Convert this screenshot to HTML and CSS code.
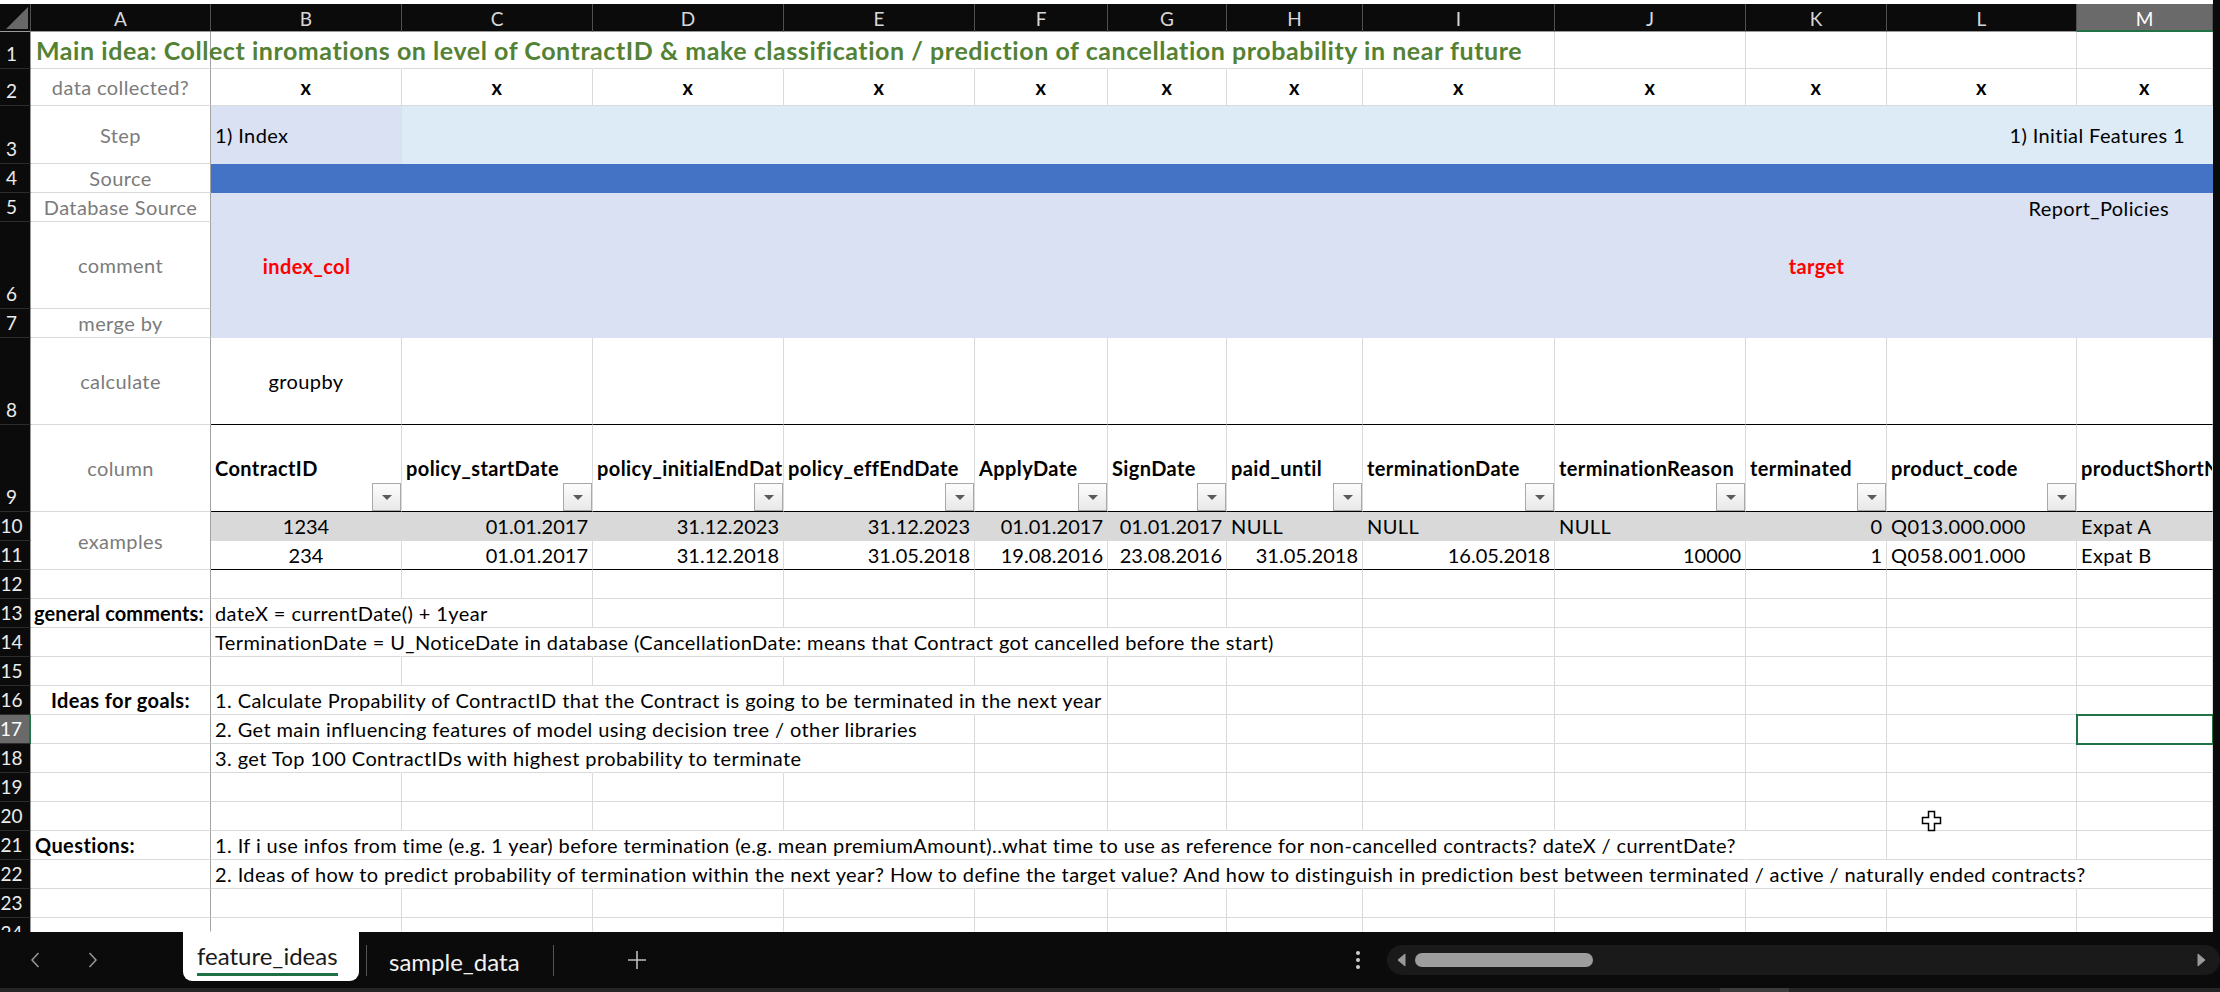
FILE: index.html
```html
<!DOCTYPE html>
<html>
<head>
<meta charset="utf-8">
<title>feature_ideas</title>
<link rel="stylesheet" href="styles.css">
</head>
<body>
<div class="app">
  <div class="sheet">
    <!-- column header -->
    <div class="corner"><svg width="22" height="22" viewBox="0 0 22 22"><path d="M22 0V22H0Z" fill="#686868"/></svg></div>
    <div class="ch">A</div><div class="ch">B</div><div class="ch">C</div><div class="ch">D</div><div class="ch">E</div><div class="ch">F</div><div class="ch">G</div><div class="ch">H</div><div class="ch">I</div><div class="ch">J</div><div class="ch">K</div><div class="ch">L</div><div class="ch sel">M</div>

    <!-- row 1 -->
    <div class="rh">1</div>
    <div class="c a ov title">Main idea: Collect inromations on level of ContractID &amp; make classification / prediction of cancellation probability in near future</div>
    <div class="c nr"></div><div class="c nr"></div><div class="c nr"></div><div class="c nr"></div><div class="c nr"></div><div class="c nr"></div><div class="c nr"></div>
    <div class="c"></div><div class="c"></div><div class="c"></div><div class="c"></div><div class="c"></div>

    <!-- row 2 -->
    <div class="rh">2</div>
    <div class="c a lab">data collected?</div>
    <div class="c x">x</div><div class="c x">x</div><div class="c x">x</div><div class="c x">x</div><div class="c x">x</div><div class="c x">x</div><div class="c x">x</div><div class="c x">x</div><div class="c x">x</div><div class="c x">x</div><div class="c x">x</div><div class="c x">x</div>

    <!-- row 3 -->
    <div class="rh">3</div>
    <div class="c a lab">Step</div>
    <div class="c b3">1) Index</div>
    <div class="c c3">1) Initial Features 1</div>

    <!-- row 4 -->
    <div class="rh">4</div>
    <div class="c a lab">Source</div>
    <div class="c blue"></div>

    <!-- rows 5-7 -->
    <div class="rh">5</div>
    <div class="c a lab">Database Source</div>
    <div class="rh">6</div>
    <div class="c a lab">comment</div>
    <div class="rh">7</div>
    <div class="c a lab">merge by</div>
    <div class="block"></div>
    <div class="t red idx">index_col</div>
    <div class="t red tgt">target</div>
    <div class="t rp">Report_Policies</div>

    <!-- row 8 -->
    <div class="rh">8</div>
    <div class="c a lab">calculate</div>
    <div class="c bk ctr">groupby</div>
    <div class="c bk"></div><div class="c bk"></div><div class="c bk"></div><div class="c bk"></div><div class="c bk"></div><div class="c bk"></div><div class="c bk"></div><div class="c bk"></div><div class="c bk"></div><div class="c bk"></div><div class="c bk"></div>

    <!-- row 9 -->
    <div class="rh">9</div>
    <div class="c a lab">column</div>
    <div class="c hd bk"><span>ContractID</span><i class="dd"></i></div>
    <div class="c hd bk"><span>policy_startDate</span><i class="dd"></i></div>
    <div class="c hd bk"><span>policy_initialEndDate</span><i class="dd"></i></div>
    <div class="c hd bk"><span>policy_effEndDate</span><i class="dd"></i></div>
    <div class="c hd bk"><span>ApplyDate</span><i class="dd"></i></div>
    <div class="c hd bk"><span>SignDate</span><i class="dd"></i></div>
    <div class="c hd bk"><span>paid_until</span><i class="dd"></i></div>
    <div class="c hd bk"><span>terminationDate</span><i class="dd"></i></div>
    <div class="c hd bk"><span>terminationReason</span><i class="dd"></i></div>
    <div class="c hd bk"><span>terminated</span><i class="dd"></i></div>
    <div class="c hd bk"><span>product_code</span><i class="dd"></i></div>
    <div class="c hd bk"><span>productShortName</span></div>

    <!-- row 10 -->
    <div class="rh">10</div>
    <div class="c a lab r2">examples</div>
    <div class="c g ctr num">1234</div>
    <div class="c g rt">01.01.2017</div>
    <div class="c g rt">31.12.2023</div>
    <div class="c g rt">31.12.2023</div>
    <div class="c g rt">01.01.2017</div>
    <div class="c g rt">01.01.2017</div>
    <div class="c g">NULL</div>
    <div class="c g">NULL</div>
    <div class="c g">NULL</div>
    <div class="c g rt">0</div>
    <div class="c g">Q013.000.000</div>
    <div class="c g">Expat A</div>

    <!-- row 11 -->
    <div class="rh">11</div>
    <div class="c bk ctr num">234</div>
    <div class="c bk rt">01.01.2017</div>
    <div class="c bk rt">31.12.2018</div>
    <div class="c bk rt">31.05.2018</div>
    <div class="c bk rt">19.08.2016</div>
    <div class="c bk rt">23.08.2016</div>
    <div class="c bk rt">31.05.2018</div>
    <div class="c bk rt">16.05.2018</div>
    <div class="c bk rt">10000</div>
    <div class="c bk rt">1</div>
    <div class="c bk">Q058.001.000</div>
    <div class="c bk">Expat B</div>

    <!-- row 12 -->
    <div class="rh">12</div>
    <div class="c a"></div>
    <div class="c"></div><div class="c"></div><div class="c"></div><div class="c"></div><div class="c"></div><div class="c"></div><div class="c"></div><div class="c"></div><div class="c"></div><div class="c"></div><div class="c"></div><div class="c"></div>

    <!-- row 13 -->
    <div class="rh">13</div>
    <div class="c a b tight">general comments:</div>
    <div class="c nr ov">dateX = currentDate() + 1year</div>
    <div class="c"></div>
    <div class="c"></div><div class="c"></div><div class="c"></div><div class="c"></div><div class="c"></div><div class="c"></div><div class="c"></div><div class="c"></div><div class="c"></div><div class="c"></div>

    <!-- row 14 -->
    <div class="rh">14</div>
    <div class="c a"></div>
    <div class="c nr ov">TerminationDate = U_NoticeDate in database (CancellationDate: means that Contract got cancelled before the start)</div>
    <div class="c nr"></div><div class="c nr"></div><div class="c nr"></div><div class="c nr"></div><div class="c nr"></div>
    <div class="c"></div>
    <div class="c"></div><div class="c"></div><div class="c"></div><div class="c"></div><div class="c"></div>

    <!-- row 15 -->
    <div class="rh">15</div>
    <div class="c a"></div>
    <div class="c"></div><div class="c"></div><div class="c"></div><div class="c"></div><div class="c"></div><div class="c"></div><div class="c"></div><div class="c"></div><div class="c"></div><div class="c"></div><div class="c"></div><div class="c"></div>

    <!-- row 16 -->
    <div class="rh">16</div>
    <div class="c a b ctr">Ideas for goals:</div>
    <div class="c nr ov">1. Calculate Propability of ContractID that the Contract is going to be terminated in the next year</div>
    <div class="c nr"></div><div class="c nr"></div><div class="c nr"></div>
    <div class="c"></div>
    <div class="c"></div><div class="c"></div><div class="c"></div><div class="c"></div><div class="c"></div><div class="c"></div><div class="c"></div>

    <!-- row 17 -->
    <div class="rh sel">17</div>
    <div class="c a"></div>
    <div class="c nr ov">2. Get main influencing features of model using decision tree / other libraries</div>
    <div class="c nr"></div><div class="c nr"></div>
    <div class="c"></div>
    <div class="c"></div><div class="c"></div><div class="c"></div><div class="c"></div><div class="c"></div><div class="c"></div><div class="c"></div>
    <div class="c cur"></div>

    <!-- row 18 -->
    <div class="rh">18</div>
    <div class="c a"></div>
    <div class="c nr ov">3. get Top 100 ContractIDs with highest probability to terminate</div>
    <div class="c nr"></div><div class="c nr"></div>
    <div class="c"></div>
    <div class="c"></div><div class="c"></div><div class="c"></div><div class="c"></div><div class="c"></div><div class="c"></div><div class="c"></div><div class="c"></div>

    <!-- row 19 -->
    <div class="rh">19</div>
    <div class="c a"></div>
    <div class="c"></div><div class="c"></div><div class="c"></div><div class="c"></div><div class="c"></div><div class="c"></div><div class="c"></div><div class="c"></div><div class="c"></div><div class="c"></div><div class="c"></div><div class="c"></div>

    <!-- row 20 -->
    <div class="rh">20</div>
    <div class="c a"></div>
    <div class="c"></div><div class="c"></div><div class="c"></div><div class="c"></div><div class="c"></div><div class="c"></div><div class="c"></div><div class="c"></div><div class="c"></div><div class="c"></div><div class="c"></div><div class="c"></div>

    <!-- row 21 -->
    <div class="rh">21</div>
    <div class="c a b">Questions:</div>
    <div class="c nr ov">1. If i use infos from time (e.g. 1 year) before termination (e.g. mean premiumAmount)..what time to use as reference for non-cancelled contracts? dateX / currentDate?</div>
    <div class="c nr"></div><div class="c nr"></div><div class="c nr"></div><div class="c nr"></div><div class="c nr"></div><div class="c nr"></div><div class="c nr"></div><div class="c nr"></div>
    <div class="c"></div>
    <div class="c"></div><div class="c"></div>

    <!-- row 22 -->
    <div class="rh">22</div>
    <div class="c a"></div>
    <div class="c nr ov">2. Ideas of how to predict probability of termination within the next year? How to define the target value? And how to distinguish in prediction best between terminated / active / naturally ended contracts?</div>
    <div class="c nr"></div><div class="c nr"></div><div class="c nr"></div><div class="c nr"></div><div class="c nr"></div><div class="c nr"></div><div class="c nr"></div><div class="c nr"></div><div class="c nr"></div><div class="c nr"></div>
    <div class="c"></div>

    <!-- row 23 -->
    <div class="rh">23</div>
    <div class="c a"></div>
    <div class="c"></div><div class="c"></div><div class="c"></div><div class="c"></div><div class="c"></div><div class="c"></div><div class="c"></div><div class="c"></div><div class="c"></div><div class="c"></div><div class="c"></div><div class="c"></div>

    <!-- row 24 (partially visible) -->
    <div class="rh last">24</div>
    <div class="c a lr"></div>
    <div class="c lr"></div><div class="c lr"></div><div class="c lr"></div><div class="c lr"></div><div class="c lr"></div><div class="c lr"></div><div class="c lr"></div><div class="c lr"></div><div class="c lr"></div><div class="c lr"></div><div class="c lr"></div><div class="c lr"></div>
  </div>

  <div class="tabs">
    <div class="nav">
      <svg class="chev" width="10" height="16" viewBox="0 0 10 16"><path d="M8.5 1 2 8l6.5 7" fill="none" stroke="#9a9a9a" stroke-width="1.5"/></svg>
      <svg class="chev next" width="10" height="16" viewBox="0 0 10 16"><path d="M1.5 1 8 8l-6.5 7" fill="none" stroke="#9a9a9a" stroke-width="1.5"/></svg>
    </div>
    <div class="tab active"><span class="lbl">feature_ideas</span></div>
    <div class="sep"></div>
    <div class="tab other">sample_data</div>
    <div class="sep"></div>
    <svg class="plus" width="20" height="20" viewBox="0 0 20 20"><path d="M10 1v18M1 10h18" stroke="#bdbdbd" stroke-width="1.6"/></svg>
    <div class="dots"><i></i><i></i><i></i></div>
    <div class="scroll">
      <svg class="arr" width="9" height="14" viewBox="0 0 9 14"><path d="M8 1v12L1 7Z" fill="#9a9a9a" stroke="#9a9a9a" stroke-linejoin="round"/></svg>
      <div class="thumb"></div>
      <svg class="arr right" width="9" height="14" viewBox="0 0 9 14"><path d="M1 1v12l7-6Z" fill="#9a9a9a" stroke="#9a9a9a" stroke-linejoin="round"/></svg>
    </div>
  </div>
  <div class="bottom"><i></i></div>

  <svg class="cursor" width="22" height="22" viewBox="0 0 22 22"><path d="M7.5 1.5h6v6h6v6h-6v7h-6v-7h-6v-6h6z" fill="#fff" stroke="#000" stroke-width="1.5"/></svg>
</div>
</body>
</html>
```

FILE: styles.css
```css
* { box-sizing: border-box; }
html, body { margin: 0; padding: 0; }
body {
  background: #0b0b0b;
  width: 2220px;
  height: 992px;
  overflow: hidden;
  font-family: Lato, "Liberation Sans", sans-serif;
}
.app {
  position: relative;
  display: flex;
  flex-direction: column;
  width: 2220px;
  height: 992px;
}

/* ---------- grid ---------- */
.sheet {
  flex: none;
  display: grid;
  width: 2213px;
  height: 932px;
  overflow: hidden;
  grid-template-columns: 31px 180px 191px 191px 191px 191px 133px 119px 136px 192px 191px 141px 190px 136px;
  grid-template-rows: 32px 37px 37px 58px 29px 29px 87px 29px 87px 87px 29px 29px repeat(12, 29px) 14px;
  background: #fff;
}

.corner {
  margin-top: 4px;
  background: #0b0b0b;
  border-right: 1px solid #4f4f4f;
  border-bottom: 1px solid #9a9a9a;
  display: flex;
  align-items: flex-end;
  justify-content: flex-end;
  padding: 0 2px 2px 0;
}
.corner svg { display: block; }

.ch {
  margin-top: 4px;
  background: #0b0b0b;
  color: #d8d8d8;
  font-size: 19px;
  display: flex;
  align-items: center;
  justify-content: center;
  padding-top: 2px;
  border-right: 1px solid #4f4f4f;
  border-bottom: 1px solid #9a9a9a;
}
.ch.sel {
  background: #6a6a6a;
  color: #fff;
  border-bottom: 2px solid #217346;
}

.rh {
  background: #0b0b0b;
  color: #ececec;
  font-size: 19px;
  line-height: 26px;
  display: flex;
  align-items: flex-end;
  justify-content: center;
  padding: 0 7px 1px 0;
  border-right: 1px solid #9a9a9a;
  border-bottom: 1px solid #2c2c2c;
  overflow: hidden;
}
.rh.sel {
  background: #6a6a6a;
  color: #fff;
  border-right: 2px solid #217346;
}
.rh.last {
  align-items: flex-start;
  padding-top: 2px;
  border-bottom: none;
}

.c {
  background: #fff;
  border-right: 1px solid #dadada;
  border-bottom: 1px solid #dadada;
  display: flex;
  align-items: center;
  padding: 0 4px;
  white-space: nowrap;
  overflow: hidden;
  font-size: 20px;
  letter-spacing: 0.4px;
  color: #000;
  min-width: 0;
}
.a { border-right-color: #a3a3a3; }
.lab { color: #7b7b7b; justify-content: center; }
.nr { border-right-color: transparent; }
.ov { overflow: visible; position: relative; z-index: 1; }
.b { font-weight: 700; }
.tight { letter-spacing: 0.1px; padding-left: 3px; }
.ctr { justify-content: center; }
.rt { justify-content: flex-end; letter-spacing: 0; }
.num { letter-spacing: 0; }
.bk { border-bottom-color: #000; }
.lr { border-bottom-color: transparent; }
.r2 { grid-row: span 2; }

.title {
  color: #548235;
  font-weight: 700;
  font-size: 25px;
  letter-spacing: 0.55px;
  padding-left: 5px;
}
.x { justify-content: center; font-weight: 700; }

.b3 { background: #d9e1f2; border-color: transparent; }
.c3 {
  grid-column: span 11;
  background: #ddebf7;
  border-color: transparent;
  justify-content: flex-end;
  padding-right: 27px;
}
.blue {
  grid-column: span 12;
  background: #4472c4;
  border-color: transparent;
}
.block {
  grid-row: 6 / 9;
  grid-column: 3 / 15;
  background: #d9e1f2;
}
.t {
  display: flex;
  align-items: center;
  white-space: nowrap;
  font-size: 20px;
  letter-spacing: 0.4px;
  padding: 0 4px;
  color: #000;
}
.red { color: #ff0000; font-weight: 700; justify-content: center; }
.idx { grid-row: 7; grid-column: 3; }
.tgt { grid-row: 7; grid-column: 12; }
.rp { grid-row: 6; grid-column: 13 / 15; justify-content: flex-end; padding-right: 44px; }

.hd {
  display: grid;
  grid-template-columns: minmax(0, 1fr);
  grid-template-rows: minmax(0, 1fr);
  font-weight: 700;
  padding: 0 0 0 4px;
}
.hd > * { grid-area: 1 / 1; }
.hd span { align-self: center; white-space: nowrap; }
.dd {
  align-self: end;
  justify-self: end;
  width: 29px;
  height: 28px;
  border: 1px solid #a9a9a9;
  background: linear-gradient(#fdfdfd, #e8e8e8);
  display: flex;
  align-items: center;
  justify-content: center;
}
.dd::after {
  content: "";
  border-left: 5px solid transparent;
  border-right: 5px solid transparent;
  border-top: 5px solid #5a5a5a;
}

.g {
  background: #d9d9d9;
  border-right-color: transparent;
  border-bottom-color: transparent;
}

.cur {
  outline: 2px solid #217346;
  outline-offset: -1px;
  position: relative;
  z-index: 2;
}

/* ---------- sheet tabs ---------- */
.tabs {
  flex: none;
  height: 56px;
  display: flex;
  align-items: center;
  background: #0b0b0b;
}
.nav {
  display: flex;
  align-items: center;
  gap: 48px;
  margin-left: 30px;
}
.chev { display: block; }
.tab {
  font-size: 24px;
  white-space: nowrap;
}
.tab.active {
  align-self: flex-start;
  margin-left: 85px;
  width: 176px;
  height: 49px;
  background: #fff;
  border-radius: 0 0 9px 9px;
  color: #1a1a1a;
  padding: 9px 0 0 14px;
}
.lbl {
  display: inline-block;
  line-height: 28px;
  padding-bottom: 3px;
  border-bottom: 3px solid #1e7145;
}
.sep {
  width: 1px;
  height: 31px;
  background: #555;
  margin-left: 7px;
}
.tab.other {
  color: #f2f2f2;
  width: 179px;
  padding-left: 22px;
  padding-top: 2px;
}
.plus { display: block; margin-left: 73px; }
.dots {
  margin-left: 709px;
  display: flex;
  flex-direction: column;
  gap: 3px;
}
.dots i {
  display: block;
  width: 4px;
  height: 4px;
  border-radius: 2px;
  background: #cfcfcf;
}
.scroll {
  margin-left: 27px;
  width: 833px;
  height: 30px;
  border-radius: 15px;
  background: #1a1a1a;
  display: flex;
  align-items: center;
  padding: 0 14px 0 10px;
}
.arr { display: block; }
.thumb {
  margin-left: 9px;
  width: 178px;
  height: 14px;
  border-radius: 7px;
  background: #9d9d9d;
}
.arr.right { margin-left: auto; }

.bottom {
  flex: none;
  height: 4px;
  background: #262626;
  display: flex;
}
.bottom i {
  display: block;
  margin-left: 1720px;
  width: 69px;
  height: 4px;
  background: #3c3c3c;
}

.cursor {
  position: absolute;
  left: 1921px;
  top: 810px;
}
```
